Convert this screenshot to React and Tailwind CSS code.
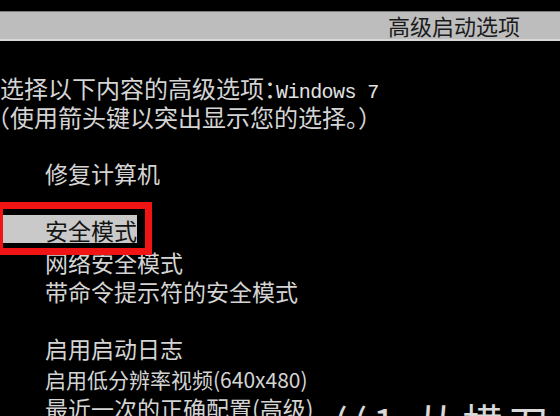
const cjk = "font-['Noto_Sans_CJK_SC','Noto_Sans',sans-serif]";

const Row = ({ children, className = '' }) => (
  <div className={`h-[29px] leading-[29px] whitespace-nowrap ${className}`}>{children}</div>
);

export default function App() {
  return (
    <div className={`relative h-[416px] w-full overflow-hidden bg-black text-[#d4d4d4] ${cjk}`}>
      <div className="h-[11px]" />
      <div className="flex h-[30px] items-center justify-end border-t border-[#7c7c7c] border-b-2 border-b-[#d8d8d8] bg-[#bdbdbd] pr-[40px] text-[22px] text-[#1b1b1b]">
        高级启动选项
      </div>

      <div className="pt-[32px]">
        <Row className="text-[24px]">
          选择以下内容的高级选项
          <span className="inline-block w-[12px]">：</span>
          <span className="font-['Liberation_Mono',monospace] text-[20px] tracking-[-0.6px] text-[#e2e2e2]">Windows 7</span>
        </Row>
        <Row className="-ml-[14px] text-[24px]">（使用箭头键以突出显示您的选择。）</Row>

        <div className="mt-[28px] text-[23px]">
          <Row className="pl-[45px]">修复计算机</Row>

          <div className="mt-[27px] ml-[3px] h-[28px] w-[134px] bg-[#c9c9c9] pl-[42px] leading-[30px] text-[#141414]">
            安全模式
          </div>

          <Row className="mt-[5px] pl-[45px]">网络安全模式</Row>
          <Row className="pl-[45px]">带命令提示符的安全模式</Row>

          <Row className="mt-[28px] pl-[45px]">启用启动日志</Row>
          <Row className="mt-[2px] pl-[45px] text-[21px]">启用低分辨率视频(640x480)</Row>
          <Row className="pl-[45px]">最近一次的正确配置(高级)</Row>
        </div>
      </div>

      {/* annotation box round the highlighted item */}
      <div className="absolute left-[-4px] top-[202px] h-[53px] w-[156px] border-[7px] border-[#f01414]" />

      {/* watermark, mostly cut off by the bottom edge */}
      <div className="absolute left-[334px] top-[401px] whitespace-nowrap text-[40px] leading-none tracking-[6px] text-white/85">
        ((1 从横刀小
      </div>
    </div>
  );
}
